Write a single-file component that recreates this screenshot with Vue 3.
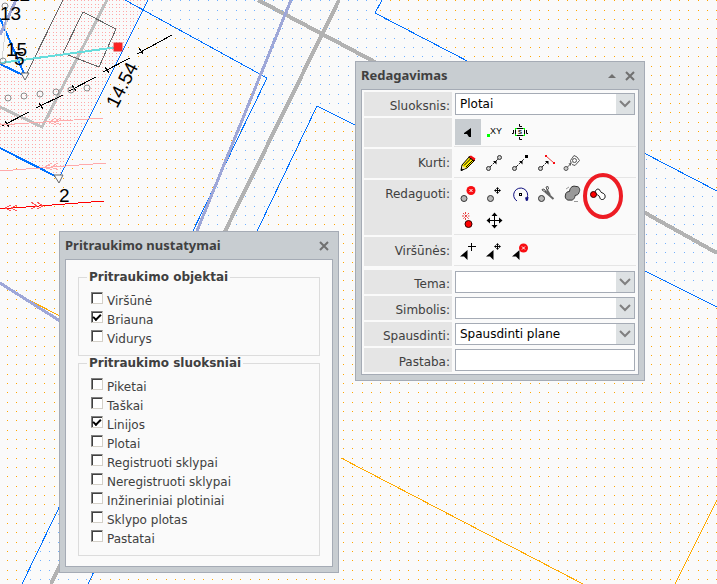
<script setup>
import { ref } from 'vue'

const snapObjects = ref([
  { id: 'virsune', label: 'Viršūnė', on: false },
  { id: 'briauna', label: 'Briauna', on: true },
  { id: 'vidurys', label: 'Vidurys', on: false },
])

const snapLayers = ref([
  { id: 'piketai', label: 'Piketai', on: false },
  { id: 'taskai', label: 'Taškai', on: false },
  { id: 'linijos', label: 'Linijos', on: true },
  { id: 'plotai', label: 'Plotai', on: false },
  { id: 'registruoti', label: 'Registruoti sklypai', on: false },
  { id: 'neregistruoti', label: 'Neregistruoti sklypai', on: false },
  { id: 'inzineriniai', label: 'Inžineriniai plotiniai', on: false },
  { id: 'sklypo', label: 'Sklypo plotas', on: false },
  { id: 'pastatai', label: 'Pastatai', on: false },
])

const groups = [
  { title: 'Pritraukimo objektai', items: snapObjects },
  { title: 'Pritraukimo sluoksniai', items: snapLayers },
]

const layer = ref('Plotai')
const theme = ref('')
const symbol = ref('')
const print = ref('Spausdinti plane')
const note = ref('')

const pipeNodes = [[8, 98], [24, 96], [40, 94], [56, 92], [71, 90], [87, 88], [5, 6], [3, 61]]
const ticks = [[7, 124], [41, 106], [74, 88], [107, 70], [141, 51]]
</script>

<template>
  <main class="workspace">
    <svg class="map" aria-hidden="true">
      <defs>
        <pattern id="dots-orange" width="28" height="28" patternUnits="userSpaceOnUse">
          <path class="dot-orange" d="M7 0h1v1h-1zM16 0h1v1h-1zM26 0h1v1h-1zM7 10h1v1h-1zM16 10h1v1h-1zM26 10h1v1h-1zM7 19h1v1h-1zM16 19h1v1h-1zM26 19h1v1h-1z" />
        </pattern>
        <pattern id="dots-blue" width="28" height="28" patternUnits="userSpaceOnUse">
          <path class="dot-blue" d="M2 0h1v1h-1zM12 0h1v1h-1zM21 0h1v1h-1zM2 10h1v1h-1zM12 10h1v1h-1zM21 10h1v1h-1zM2 19h1v1h-1zM12 19h1v1h-1zM21 19h1v1h-1z" />
        </pattern>
        <pattern id="dots-pink" width="7" height="7" patternUnits="userSpaceOnUse">
          <path class="dot-pink" d="M0 0h1v1h-1zM4 0h1v1h-1zM0 4h1v1h-1zM4 4h1v1h-1z" />
        </pattern>
      </defs>

      <rect width="100%" height="100%" fill="url(#dots-orange)" />
      <path class="ground" d="M125 0L267 78L22 584H88L317 106L717 307V191L375 13L382 0Z" />
      <path fill="url(#dots-blue)" d="M125 0L267 78L22 584H88L317 106L717 307V191L375 13L382 0Z" />
      <path class="ground" d="M63 0H148L59 178L0 148V64L25 76Z" />
      <path fill="url(#dots-pink)" d="M63 0H148L59 178L0 148V64L25 76Z" />

      <path class="line lightgrey" d="M107 0L42 127L0 107" />
      <path class="line grey" d="M258 0L373 61L717 253M339 0L51 584" />
      <g class="line blue">
        <path d="M125 0L267 78L22 584M88 584L317 106L717 307M382 0L375 13L717 191M148 0L59 178" />
        <path class="thick" d="M59 178L0 148M0 18L25 76L0 64" />
      </g>
      <path class="line orange" d="M25 298L60 316M341 458L583 584M717 500L675 584" />
      <path class="line lavender" d="M291 0L197 231M0 283L60 321M16 0L0 35" />

      <path class="line dark" d="M63 0L25 77M83 12L116 29L99 67L63 53Z" />
      <path class="line hair" d="M7 16L2 60" />
      <path class="line cyan" d="M0 63L118 47" />
      <path class="line black" d="M2 126L29 112M36 108L63 95M69 91L96 77M103 72L130 58M137 54L172 35" />
      <path
        v-for="[x, y] in ticks"
        :key="'t' + x"
        class="line black"
        :d="`M${x - 2} ${y - 3}l4 6`"
      />
      <circle v-for="[x, y] in pipeNodes" :key="'n' + x" class="line node" :cx="x" :cy="y" r="3" />
      <path class="line pink" d="M0 125L103 118M0 171L106 163M56 118l-7 4l7 3M61 118l-7 4l7 3M52 163l-7 4l7 3M58 163l-7 4l7 3" />
      <path class="line red" d="M0 209L104 201" />
      <path class="line red fine" d="M11 205l-6 3l6 3M17 205l-6 3l6 3M31 202l6 4l-6 3M37 202l6 4l-6 3" />
      <path class="marker" d="M21 73h8l-4 7zM54 175h9l-4 8z" />
      <rect class="handle" x="114" y="43" width="8" height="8" />

      <g class="map-text">
        <text x="9" y="1">12</text>
        <text x="0" y="20">13</text>
        <text x="6" y="56">15</text>
        <text x="14" y="65">5</text>
        <text x="59" y="202">2</text>
        <text transform="translate(117 109) rotate(-63)">14.54</text>
      </g>
    </svg>

    <section class="window snapping" aria-labelledby="snap-title">
      <header class="titlebar">
        <h2 id="snap-title">Pritraukimo nustatymai</h2>
        <button type="button" class="tool" aria-label="Uždaryti">
          <svg viewBox="0 0 12 12"><path class="close" d="M2 2L10 10M10 2L2 10" /></svg>
        </button>
      </header>
      <form class="body options">
        <fieldset v-for="g in groups" :key="g.title">
          <legend>{{ g.title }}</legend>
          <div v-for="item in g.items.value" :key="item.id" class="option">
            <input :id="item.id" v-model="item.on" type="checkbox" />
            <label :for="item.id">{{ item.label }}</label>
          </div>
        </fieldset>
      </form>
    </section>

    <section class="window editing" aria-labelledby="edit-title">
      <header class="titlebar">
        <h2 id="edit-title">Redagavimas</h2>
        <button type="button" class="tool" aria-label="Suskleisti">
          <svg viewBox="0 0 12 12"><path class="solid" d="M2 8L6 4L10 8Z" /></svg>
        </button>
        <button type="button" class="tool" aria-label="Uždaryti">
          <svg viewBox="0 0 12 12"><path class="close" d="M2 2L10 10M10 2L2 10" /></svg>
        </button>
      </header>

      <form class="body grid">
        <label class="name" for="layer">Sluoksnis:</label>
        <div class="value picker">
          <select id="layer" v-model="layer"><option>Plotai</option></select>
          <span class="arrow"><svg viewBox="0 0 18 20"><path d="M4 7L9 12L14 7" /></svg></span>
        </div>

        <span class="name"></span>
        <div class="value icons">
          <button type="button" class="active" aria-label="Pažymėti">
            <svg viewBox="0 0 26 26"><path class="ink" d="M16 9L9 14V15L12 15L14 18H16Z" /></svg>
          </button>
          <button type="button" aria-label="Koordinatės">
            <svg viewBox="0 0 26 26">
              <rect class="lime" x="6" y="15" width="3" height="3" />
              <text class="glyph" x="9" y="15">XY</text>
            </svg>
          </button>
          <button type="button" aria-label="Mastelis">
            <svg viewBox="0 0 26 26">
              <rect class="o" x="8.500" y="9.500" width="9" height="7" />
              <path class="lime" d="M8 9h2v1h-1v1h-1zM16 9h2v2h-1v-1h-1zM8 15h1v1h1v1h-2zM17 15h1v2h-2v-1h1z" />
              <text class="glyph tiny" x="11" y="15">S</text>
              <path class="o" d="M12.500 5V7.500H15M12.500 18V20.500H15M5 14.500H6.500V11M19.500 11V14.500H21" />
            </svg>
          </button>
        </div>

        <span class="name">Kurti:</span>
        <div class="value icons">
          <button type="button" aria-label="Piešti">
            <svg viewBox="0 0 26 26">
              <path class="pencil" d="M7 15L15 6L20 10L12 18L6 20.500Z" />
              <path class="redfill" d="M14 7L16 5.500L20.500 8.500L19 11Z" />
              <path class="o" d="M9 15.500L16 8.500M11 17L18 10M13.500 7L19 11" />
              <path class="pale" d="M7 16L11 18L7 19.500Z" />
              <path class="ink" d="M6 18L8.500 20L6 21Z" />
            </svg>
          </button>
          <button type="button" aria-label="Nuo taško iki mazgo">
            <svg viewBox="0 0 26 26">
              <circle class="ring" cx="7.500" cy="18.500" r="2" /><circle class="ring" cx="18.500" cy="7.500" r="2" />
              <path class="o dash" d="M9 17L17 9" /><path class="ink" d="M12 11H15.500V14.500Z" />
            </svg>
          </button>
          <button type="button" aria-label="Nuo mazgo iki taško">
            <svg viewBox="0 0 26 26">
              <circle class="ring" cx="7.500" cy="18.500" r="2" /><rect class="ink" x="18" y="5" width="3" height="3" />
              <path class="o dash" d="M9 17L17 9" /><path class="ink" d="M12 11H15.500V14.500Z" />
            </svg>
          </button>
          <button type="button" aria-label="Statmuo">
            <svg viewBox="0 0 26 26">
              <circle class="ring" cx="7.500" cy="18.500" r="2" />
              <path class="o dash" d="M9 17L15 11" /><path class="ink" d="M12 11H15.500V14.500Z" />
              <path class="redline" d="M13 6L21 13" /><path class="redfill" d="M12 5h2v2h-2zM20 12h2v2h-2z" />
            </svg>
          </button>
          <button type="button" aria-label="Kontūras">
            <svg viewBox="0 0 26 26">
              <circle class="ring soft" cx="7" cy="18.500" r="2" />
              <path class="o soft" d="M8.500 17L13 12.500" /><path class="mid" d="M9.500 13.500L12 13V16Z" />
              <path class="o soft" d="M12 13L11.500 10.500L15 5.500L18 7L20.500 10.500L16 15.500L13 14.500" />
              <circle class="o soft" cx="15.500" cy="10.500" r="2" />
            </svg>
          </button>
        </div>

        <span class="name">Redaguoti:</span>
        <div class="value icons">
          <button type="button" aria-label="Pašalinti">
            <svg viewBox="0 0 26 26">
              <circle class="ball" cx="9" cy="17.500" r="3" />
              <circle class="redfill" cx="16" cy="9.500" r="4.500" /><path class="whiteline" d="M14.500 8L17.500 11M17.500 8L14.500 11" />
            </svg>
          </button>
          <button type="button" aria-label="Perkelti">
            <svg viewBox="0 0 26 26">
              <circle class="ball" cx="9.500" cy="17.500" r="3" />
              <path class="o" d="M16.500 7V12M14 9.500H19" />
              <path class="ink" d="M15 8L16.500 6L18 8ZM15 11L16.500 13L18 11ZM15 8L13 9.500L15 11ZM18 8L20 9.500L18 11Z" />
            </svg>
          </button>
          <button type="button" aria-label="Pasukti">
            <svg viewBox="0 0 26 26">
              <path class="navy" d="M10 20A7 7 0 1 1 20 17" /><path class="navyfill" d="M18 16.500L21.500 16L21 19.500L19 20Z" />
              <rect class="o" x="12.500" y="12.500" width="2" height="2" />
            </svg>
          </button>
          <button type="button" aria-label="Kirpti">
            <svg viewBox="0 0 26 26">
              <circle class="ball" cx="8.500" cy="17.500" r="3" />
              <path class="blade" d="M12 10.500L20.500 18M14 9L17 14" />
              <path class="o soft" d="M10 10L9 8.500L11 8L13 10.500ZM14 9L13 6L15 5.500L15.500 8Z" />
            </svg>
          </button>
          <button type="button" aria-label="Sujungti">
            <svg viewBox="0 0 26 26">
              <path class="merge" d="M10.500 10.500C11 5.500 14.500 4.500 17 5.500C20.500 5 21.500 9 20 11.500C19.500 14 17.500 14 16 14.500C16 17.500 13.500 20 11 19C7.500 20 5.500 16.500 6.500 14C6.500 11.500 8.500 10.500 10.500 10.500Z" />
              <path class="o faint" d="M7 8L10 6M15 20.500H19" />
            </svg>
          </button>
          <button type="button" aria-label="Prijungti kontūrą">
            <svg viewBox="0 0 26 26">
              <path class="o white" d="M10.500 12C9.500 10 12 7 14 8.500C16 9.500 15 11.500 17.500 12C21 13 21 18 17.500 18.500C14 19 15.500 14.500 13 14.500Z" />
              <circle class="dotred" cx="8.500" cy="13.500" r="3" />
            </svg>
          </button>
          <button type="button" aria-label="Išskaidyti">
            <svg viewBox="0 0 26 26">
              <path class="redline burst" d="M10.500 5V13M7 9H14.500M8 6L14 12M14 6L8 12" />
              <circle class="dotred" cx="13.500" cy="17" r="3.500" />
            </svg>
          </button>
          <button type="button" aria-label="Stumti">
            <svg viewBox="0 0 26 26">
              <path class="o" d="M13.500 7V20M7 13.500H20" />
              <path class="ink" d="M10.500 9L13.500 5.500L16.500 9ZM10.500 18L13.500 21.500L16.500 18ZM9 10.500L5.500 13.500L9 16.500ZM18 10.500L21.500 13.500L18 16.500Z" />
            </svg>
          </button>
        </div>

        <span class="name">Viršūnės:</span>
        <div class="value icons">
          <button type="button" aria-label="Pridėti viršūnę">
            <svg viewBox="0 0 26 26">
              <path class="ink" d="M12.500 12L5 18.500L9 18.500L12.500 22Z" /><path class="o" d="M16.500 5V13M13 8.500H21" />
            </svg>
          </button>
          <button type="button" aria-label="Perkelti viršūnę">
            <svg viewBox="0 0 26 26">
              <path class="ink" d="M12.500 12L5 18.500L9 18.500L12.500 22Z" />
              <path class="o" d="M16.500 6V11M14 8.500H19" />
              <path class="ink" d="M15 7L16.500 5L18 7ZM15 10L16.500 12L18 10ZM15 7L13 8.500L15 10ZM18 7L20 8.500L18 10Z" />
            </svg>
          </button>
          <button type="button" aria-label="Pašalinti viršūnę">
            <svg viewBox="0 0 26 26">
              <path class="ink" d="M12.500 12L5 18.500L9 18.500L12.500 22Z" />
              <circle class="redfill" cx="16.500" cy="10" r="4.500" /><path class="whiteline" d="M15 8.500L18 11.500M18 8.500L15 11.500" />
            </svg>
          </button>
        </div>
      </form>

      <form class="body grid attributes">
        <label class="name" for="theme">Tema:</label>
        <div class="value picker">
          <select id="theme" v-model="theme"><option value=""></option></select>
          <span class="arrow"><svg viewBox="0 0 18 20"><path d="M4 7L9 12L14 7" /></svg></span>
        </div>

        <label class="name" for="symbol">Simbolis:</label>
        <div class="value picker">
          <select id="symbol" v-model="symbol"><option value=""></option></select>
          <span class="arrow"><svg viewBox="0 0 18 20"><path d="M4 7L9 12L14 7" /></svg></span>
        </div>

        <label class="name" for="print">Spausdinti:</label>
        <div class="value picker">
          <select id="print" v-model="print"><option>Spausdinti plane</option></select>
          <span class="arrow"><svg viewBox="0 0 18 20"><path d="M4 7L9 12L14 7" /></svg></span>
        </div>

        <label class="name" for="note">Pastaba:</label>
        <div class="value"><input id="note" v-model="note" type="text" /></div>
      </form>

      <svg class="highlight" viewBox="0 0 42 48" aria-hidden="true">
        <ellipse cx="21" cy="24" rx="18" ry="21" />
      </svg>
    </section>
  </main>
</template>

<style>
body {
  margin: 0;
  background: #fafafa;
}
</style>

<style scoped>
.workspace {
  position: relative;
  min-height: 100vh;
  overflow: hidden;
  background: #fafafa;
  color: #404040;
  font-family: "DejaVu Sans", Verdana, sans-serif;
  font-size: 12px;
}

/* Map */
.map {
  position: absolute;
  inset: 0;
  width: 100%;
  height: 100%;
}
.dot-orange { fill: #ffa500; shape-rendering: crispEdges; }
.dot-blue { fill: #70b0ff; shape-rendering: crispEdges; }
.dot-pink { fill: #ffa8a8; shape-rendering: crispEdges; }
.ground { fill: #fafafa; }
.line { fill: none; stroke-width: 1; shape-rendering: crispEdges; }
.blue { stroke: #0070ff; }
.thick { stroke-width: 2; }
.grey { stroke: #b2b2b2; stroke-width: 4; }
.lightgrey { stroke: #bebebe; stroke-width: 3; }
.lavender { stroke: #9ea7d8; stroke-width: 3; }
.orange { stroke: #ffaa00; }
.dark { stroke: #686868; }
.hair { stroke: #d8d8d8; }
.cyan { stroke: #66dcdc; stroke-width: 2; }
.black { stroke: #000; }
.node { stroke: #8c8c8c; shape-rendering: auto; }
.pink { stroke: #ffaaaa; }
.red { stroke: #ff0000; }
.fine { stroke: #ff5555; }
.marker { fill: #fafafa; stroke: #666; }
.handle { fill: #ff2020; stroke: #e03030; }
.map-text {
  fill: #000;
  font-family: "Liberation Sans", Arial, sans-serif;
  font-size: 19px;
}

/* Windows */
.window {
  position: absolute;
  box-sizing: border-box;
  padding: 0 5px 5px;
  border: 1px solid #a5abb5;
  background: #c8cdd1;
}
.snapping { left: 59px; top: 231px; width: 280px; }
.editing { left: 355px; top: 61px; width: 290px; }
.titlebar {
  display: flex;
  align-items: center;
  gap: 6px;
  height: 27px;
  padding-right: 3px;
}
.titlebar h2 {
  flex: 1;
  margin: 0;
  padding-bottom: 2px;
  font-family: "Noto Sans", Tahoma, sans-serif;
  font-size: 13px;
  font-weight: bold;
  line-height: 18px;
}
.tool {
  width: 12px;
  height: 12px;
  padding: 0;
  border: 0;
  background: none;
}
.tool svg { display: block; }
.close { fill: none; stroke: #707070; stroke-width: 2; }
.solid { fill: #707070; }
.body {
  border: 1px solid #a5abb5;
  background: #fafafa;
}

/* Snapping options */
.options { padding: 10px 12px; }
fieldset {
  min-width: 0;
  margin: 0;
  padding: 5px 12px 9px;
  border: 1px solid #dcdcdc;
}
legend {
  margin-left: -4px;
  padding: 0 2px;
  font-size: 12px;
  font-weight: bold;
  line-height: 14px;
}
.option {
  display: flex;
  gap: 4px;
  height: 19px;
}
.option input {
  appearance: none;
  box-sizing: border-box;
  width: 12px;
  height: 12px;
  margin: 3px 0 0;
  border: 1px solid;
  border-color: #808080 #d4d0c8 #d4d0c8 #808080;
  background: #fff;
  box-shadow: inset 1px 1px #404040;
}
.option input:checked::after {
  content: "";
  display: block;
  box-sizing: border-box;
  width: 8px;
  height: 5px;
  margin: 2px 0 0 1px;
  border: solid #000;
  border-width: 0 0 2px 2px;
  transform: rotate(-45deg);
}
.option label {
  padding-top: 5px;
  line-height: 14px;
}

/* Editing form */
.grid {
  display: grid;
  grid-template-columns: 88px 1fr;
  gap: 2px;
  padding: 2px;
  border-bottom: 0;
}
.attributes {
  border-top: 0;
  border-bottom: 1px solid #a5abb5;
}
.name {
  padding: 7px 2px 3px 0;
  background: #e5e5e5;
  line-height: 14px;
  text-align: right;
}
.value {
  position: relative;
  min-width: 0;
  padding: 1px;
}
.icons {
  display: flex;
  flex-wrap: wrap;
  border-bottom: 1px solid #e5e5e5;
}
.icons button {
  width: 26px;
  height: 26px;
  padding: 0;
  border: 0;
  background: none;
}
.icons .active { background: #c8cdd1; }
.icons svg { display: block; }

select,
input[type="text"] {
  display: block;
  box-sizing: border-box;
  width: 100%;
  height: 22px;
  margin: 0;
  padding: 0 4px;
  border: 1px solid #a5abb5;
  border-radius: 0;
  appearance: none;
  background: #fff;
  color: #000;
  font: inherit;
}
.arrow {
  position: absolute;
  top: 2px;
  right: 2px;
  width: 18px;
  height: 20px;
  background: #dde1e3;
  pointer-events: none;
}
.arrow svg { display: block; }
.arrow path { fill: none; stroke: #808080; stroke-width: 2; }

/* Icon strokes and fills */
.ink { fill: #000; }
.mid { fill: #555; }
.lime { fill: #00ff00; }
.glyph { fill: #000; font-family: "Liberation Sans", sans-serif; font-size: 9px; }
.tiny { font-size: 6px; font-weight: bold; }
.o { fill: none; stroke: #000; stroke-width: 1; }
.dash { stroke-dasharray: 3 1; stroke: #222; }
.soft { stroke: #555; }
.faint { stroke: #999; }
.white { fill: #fff; }
.pencil { fill: #ffee00; stroke: #000; }
.pale { fill: #e8e0c0; }
.ring { fill: #ccc; stroke: #333; }
.ring.soft { stroke: #555; }
.ball { fill: #b8b8b8; stroke: #333; }
.redfill { fill: #f80d12; }
.redline { fill: none; stroke: #e84040; }
.burst { stroke-dasharray: 2 1; }
.whiteline { stroke: #fff; stroke-width: 1; }
.navy { fill: none; stroke: #101080; }
.navyfill { fill: #101080; }
.blade { fill: none; stroke: #666; stroke-width: 2; }
.merge { fill: #999; stroke: #333; }
.dotred { fill: #ff0000; stroke: #300; }

.highlight {
  position: absolute;
  left: 226px;
  top: 110px;
  width: 42px;
  height: 48px;
  pointer-events: none;
}
.highlight ellipse { fill: none; stroke: #ed1c24; stroke-width: 4; }
</style>
